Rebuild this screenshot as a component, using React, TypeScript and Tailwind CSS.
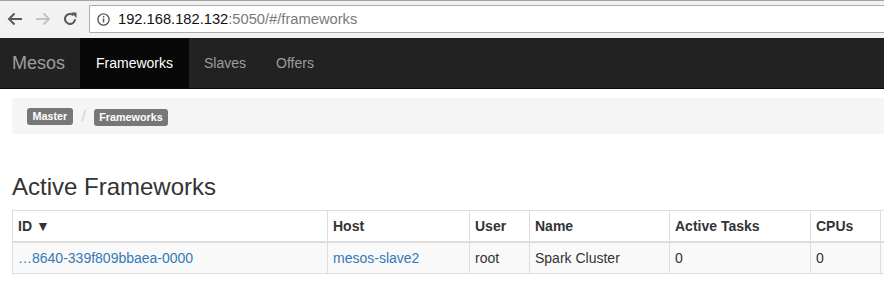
import React from "react";

const font = { fontFamily: '"Liberation Sans", Arial, Helvetica, sans-serif' };

function Chrome() {
  return (
    <div className="h-[38px] bg-[#f2f2f2] border-t border-[#a3a3a3] flex items-start">
      <div className="w-[89px] h-[36px] relative shrink-0">
        {/* back */}
        <svg className="absolute left-[7px] top-[11px]" width="16" height="14" viewBox="0 0 16 14">
          <path d="M15 7H2M7.5 1.5L2 7l5.5 5.5" stroke="#5a5a5a" strokeWidth="2" fill="none" />
        </svg>
        {/* forward */}
        <svg className="absolute left-[35px] top-[11px]" width="16" height="14" viewBox="0 0 16 14">
          <path d="M1 7h13M8.5 1.5L14 7l-5.5 5.5" stroke="#c4c4c4" strokeWidth="2" fill="none" />
        </svg>
        {/* reload */}
        <svg className="absolute left-[62px] top-[10px]" width="16" height="16" viewBox="0 0 16 16">
          <path d="M13 8.2A5 5 0 1 1 11.3 4.2" stroke="#5a5a5a" strokeWidth="2.1" fill="none" />
          <path d="M9 1.5h5.5V7z" fill="#5a5a5a" />
        </svg>
      </div>
      <div className="mt-[4px] h-[28px] flex-1 bg-white border border-r-0 border-[#ababab] rounded-l-[2px] flex items-center">
        <svg className="ml-[7px]" width="13" height="13" viewBox="0 0 13 13">
          <circle cx="6.5" cy="6.5" r="5.6" stroke="#5a5a5a" strokeWidth="1.4" fill="none" />
          <rect x="5.8" y="5.5" width="1.5" height="4" fill="#5a5a5a" />
          <rect x="5.8" y="3" width="1.5" height="1.5" fill="#5a5a5a" />
        </svg>
        <span className="ml-[8px] text-[14.7px] leading-none" style={font}>
          <span className="text-[#111]">192.168.182.132</span>
          <span className="text-[#7a7a7a]">:5050/#/frameworks</span>
        </span>
      </div>
    </div>
  );
}

function Nav() {
  return (
    <div className="h-[51px] bg-[#222222] border-b border-[#080808] flex items-stretch" style={font}>
      <div className="pl-[12px] pr-[15px] flex items-center text-[18px] text-[#9d9d9d]">Mesos</div>
      <div className="w-[109px] bg-[#080808] flex items-center justify-center text-[14px] text-white">Frameworks</div>
      <div className="px-[15px] flex items-center text-[14px] text-[#9d9d9d]">Slaves</div>
      <div className="px-[15px] flex items-center text-[14px] text-[#9d9d9d]">Offers</div>
    </div>
  );
}

function Label({ children }: { children: React.ReactNode }) {
  return (
    <span className="inline-block h-[17px] px-[5.5px] leading-[16px] text-[10.8px] font-bold text-white bg-[#777777] rounded-[3px]">
      {children}
    </span>
  );
}

export default function App() {
  const cell = "border border-[#dddddd] px-[5px] py-[5px] leading-[20px] text-left whitespace-nowrap overflow-hidden";
  return (
    <div className="w-[884px] h-[305px] overflow-hidden bg-white text-[#333333]" style={font}>
      <Chrome />
      <Nav />
      <div className="pl-[12px]">
        <div className="mt-[9px] h-[36px] bg-[#f5f5f5] rounded-l-[4px] pl-[15px] flex items-center">
          <Label>Master</Label>
          <span className="ml-[9px] text-[14px] text-[#cccccc]">/</span>
          <span className="ml-[8px]">
            <Label>Frameworks</Label>
          </span>
        </div>
        <h3 className="mt-[40px] text-[24px] leading-[26px] font-medium text-[#333333]">Active Frameworks</h3>
        <table className="mt-[10px] border-collapse table-fixed w-[1000px] text-[14px]">
          <colgroup>
            <col className="w-[315px]" />
            <col className="w-[142px]" />
            <col className="w-[60px]" />
            <col className="w-[140px]" />
            <col className="w-[141px]" />
            <col className="w-[70px]" />
            <col className="w-[132px]" />
          </colgroup>
          <thead>
            <tr className="bg-white">
              <th className={`${cell} border-b-2 font-bold`}>ID ▼</th>
              <th className={`${cell} border-b-2 font-bold`}>Host</th>
              <th className={`${cell} border-b-2 font-bold`}>User</th>
              <th className={`${cell} border-b-2 font-bold`}>Name</th>
              <th className={`${cell} border-b-2 font-bold`}>Active Tasks</th>
              <th className={`${cell} border-b-2 font-bold`}>CPUs</th>
              <th className={`${cell} border-b-2 font-bold`}></th>
            </tr>
          </thead>
          <tbody>
            <tr className="bg-[#f9f9f9]">
              <td className={`${cell} text-[#337ab7]`}>…8640-339f809bbaea-0000</td>
              <td className={`${cell} text-[#337ab7]`}>mesos-slave2</td>
              <td className={cell}>root</td>
              <td className={cell}>Spark Cluster</td>
              <td className={cell}>0</td>
              <td className={cell}>0</td>
              <td className={cell}></td>
            </tr>
          </tbody>
        </table>
      </div>
    </div>
  );
}
